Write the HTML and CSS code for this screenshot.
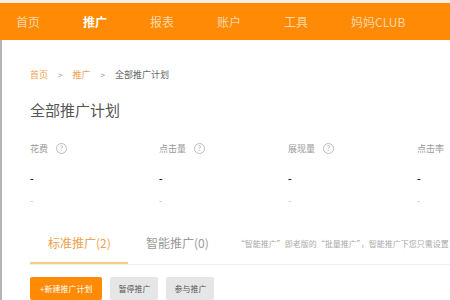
FILE: index.html
```html
<!DOCTYPE html>
<html lang="zh-CN">
<head>
    <meta charset="UTF-8">
    <meta name="viewport" content="width=device-width, initial-scale=1.0">
    <title>全部推广计划</title>
    <link rel="stylesheet" href="styles.css">
</head>
<body>
    <div class="topline"></div>
    <div class="nav">
        <a class="nav-item">首页</a>
        <a class="nav-item active">推广</a>
        <a class="nav-item">报表</a>
        <a class="nav-item">账户</a>
        <a class="nav-item">工具</a>
        <a class="nav-item">妈妈CLUB</a>
    </div>
    <div class="main">
        <div class="crumbs">
            <a class="crumb-link">首页</a>
            <span class="sep">&gt;</span>
            <a class="crumb-link">推广</a>
            <span class="sep">&gt;</span>
            <span>全部推广计划</span>
        </div>
        <h1 class="title">全部推广计划</h1>
        <div class="stats">
            <div class="stat">
                <div class="label">花费 <span class="help">?</span></div>
                <div class="value">-</div>
                <div class="sub">-</div>
            </div>
            <div class="stat">
                <div class="label">点击量 <span class="help">?</span></div>
                <div class="value">-</div>
                <div class="sub">-</div>
            </div>
            <div class="stat">
                <div class="label">展现量 <span class="help">?</span></div>
                <div class="value">-</div>
                <div class="sub">-</div>
            </div>
            <div class="stat">
                <div class="label">点击率 <span class="help">?</span></div>
                <div class="value">-</div>
                <div class="sub">-</div>
            </div>
        </div>
        <div class="tabs">
            <div class="tab active">标准推广(2)</div>
            <div class="tab">智能推广(0)</div>
            <div class="tab-note">“智能推广”即老版的“批量推广”，智能推广下您只需设置</div>
        </div>
        <div class="actions">
            <button class="btn primary">+新建推广计划</button>
            <button class="btn">暂停推广</button>
            <button class="btn">参与推广</button>
        </div>
    </div>
</body>
</html>
```

FILE: styles.css
```css
body {
    margin: 0;
    font-family: "Noto Sans CJK SC", "Noto Sans", sans-serif;
    background-color: #fff;
    overflow: hidden;
}
.topline {
    height: 3px;
    background-color: #f6efe4;
}
.nav {
    display: flex;
    align-items: center;
    height: 37px;
    padding-left: 16px;
    background-color: #ff8a05;
}
.nav-item {
    width: 67px;
    font-size: 12px;
    color: #ffd7a6;
    white-space: nowrap;
}
.nav-item.active {
    color: #fff;
    font-weight: bold;
}
.main {
    border-left: 2px solid #b5b5b5;
    padding-left: 28px;
    height: 260px;
}
.crumbs {
    display: flex;
    align-items: center;
    gap: 10px;
    padding-top: 28px;
    font-size: 9px;
    color: #666;
}
.crumb-link {
    color: #f3a04a;
}
.sep {
    color: #888;
    font-size: 8px;
}
.title {
    margin: 19px 0 0;
    font-size: 15px;
    font-weight: normal;
    color: #555;
    line-height: 20px;
}
.stats {
    display: flex;
    margin-top: 21px;
}
.stat {
    flex: 0 0 129px;
}
.label {
    display: flex;
    align-items: center;
    gap: 8px;
    font-size: 9px;
    color: #999;
    height: 14px;
}
.help {
    display: inline-flex;
    justify-content: center;
    align-items: center;
    width: 9px;
    height: 9px;
    border: 1px solid #bbb;
    border-radius: 50%;
    font-size: 7px;
    color: #aaa;
}
.value {
    margin-top: 17px;
    font-size: 10px;
    font-weight: bold;
    color: #222;
    line-height: 12px;
}
.sub {
    margin-top: 11px;
    font-size: 9px;
    color: #bbb;
    line-height: 12px;
}
.tabs {
    display: flex;
    align-items: center;
    margin-top: 15px;
    border-bottom: 1px solid #eee;
    height: 42px;
}
.tab {
    font-size: 12px;
    color: #999;
    padding: 0 18px;
    height: 42px;
    line-height: 42px;
    box-sizing: border-box;
    white-space: nowrap;
}
.tab.active {
    width: 98px;
    color: #f1a04c;
    border-bottom: 2px solid #f3cf85;
}
.tab-note {
    margin-left: 10px;
    font-size: 8px;
    color: #aaa;
    white-space: nowrap;
}
.actions {
    display: flex;
    gap: 8px;
    margin-top: 12px;
}
.btn {
    height: 23px;
    padding: 0 8px;
    border: none;
    border-radius: 2px;
    font-family: inherit;
    font-size: 8px;
    color: #555;
    background-color: #e6e6e6;
}
.btn.primary {
    padding: 0 10px;
    color: #fff;
    background-color: #ff8a05;
}
```
